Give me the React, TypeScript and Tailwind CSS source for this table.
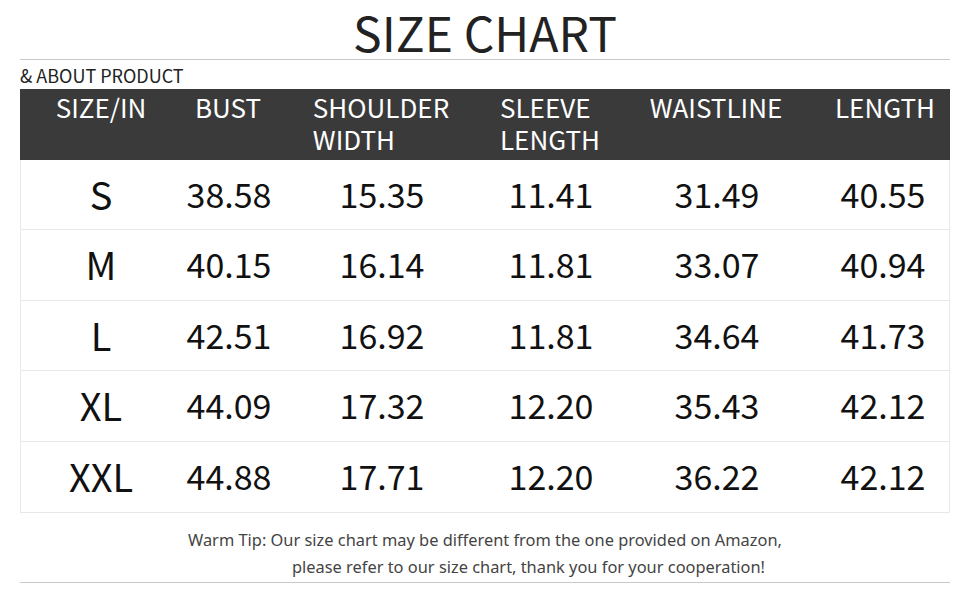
const headers = [["SIZE/IN"], ["BUST"], ["SHOULDER", "WIDTH"], ["SLEEVE", "LENGTH"], ["WAISTLINE"], ["LENGTH"]];

const rows = [
	{ size: "S", values: ["38.58", "15.35", "11.41", "31.49", "40.55"], h: "h-[70px]" },
	{ size: "M", values: ["40.15", "16.14", "11.81", "33.07", "40.94"], h: "h-[71px]" },
	{ size: "L", values: ["42.51", "16.92", "11.81", "34.64", "41.73"], h: "h-[70px]" },
	{ size: "XL", values: ["44.09", "17.32", "12.20", "35.43", "42.12"], h: "h-[71px]" },
	{ size: "XXL", values: ["44.88", "17.71", "12.20", "36.22", "42.12"], h: "h-[71px]" },
];

const gridCols = "grid grid-cols-[162px_92px_214px_124px_208px_1fr]";

const App = () => {
	return (
		<div className="w-[970px] h-[600px] bg-white px-[20px] font-['Noto_Sans_CJK_SC',sans-serif]">
			<div className="h-[60px] border-b border-[#c9c9c9] flex justify-center items-start">
				<h1 className="text-[48px] leading-[60px] text-[#222] font-normal mt-[1px]">SIZE CHART</h1>
			</div>
			<div className="h-[29px] flex items-center text-[18px] leading-[20px] text-[#222] pt-[1px]">&amp; ABOUT PRODUCT</div>

			<div className={`${gridCols} h-[71px] bg-[#3a3a3a] text-white text-[26px] leading-[32px]`}>
				{headers.map((lines, i) => (
					<div key={i} className="flex justify-center pt-[2px]">
						<div className="text-left">
							{lines.map((l) => (
								<div key={l}>{l}</div>
							))}
						</div>
					</div>
				))}
			</div>

			<div className="border-x border-[#e8e8e8]">
				{rows.map((row) => (
					<div key={row.size} className={`${gridCols} ${row.h} border-b border-[#e8e8e8] text-[34px] text-[#111] items-center text-center pb-[3px]`}>
						<div className="text-[38px] pr-[2px]">{row.size}</div>
						{row.values.map((v, i) => (
							<div key={i} className={i === 4 ? "pr-[4px]" : ""}>
								{v}
							</div>
						))}
					</div>
				))}
			</div>

			<div className="h-[70px] border-b border-[#c9c9c9] pt-[13px] font-['Noto_Sans',sans-serif] text-[16.4px] leading-[27px] text-[#444]">
				<div className="pl-[168px]">Warm Tip: Our size chart may be different from the one provided on Amazon,</div>
				<div className="pl-[272px]">please refer to our size chart, thank you for your cooperation!</div>
			</div>
		</div>
	);
};

export default App;
